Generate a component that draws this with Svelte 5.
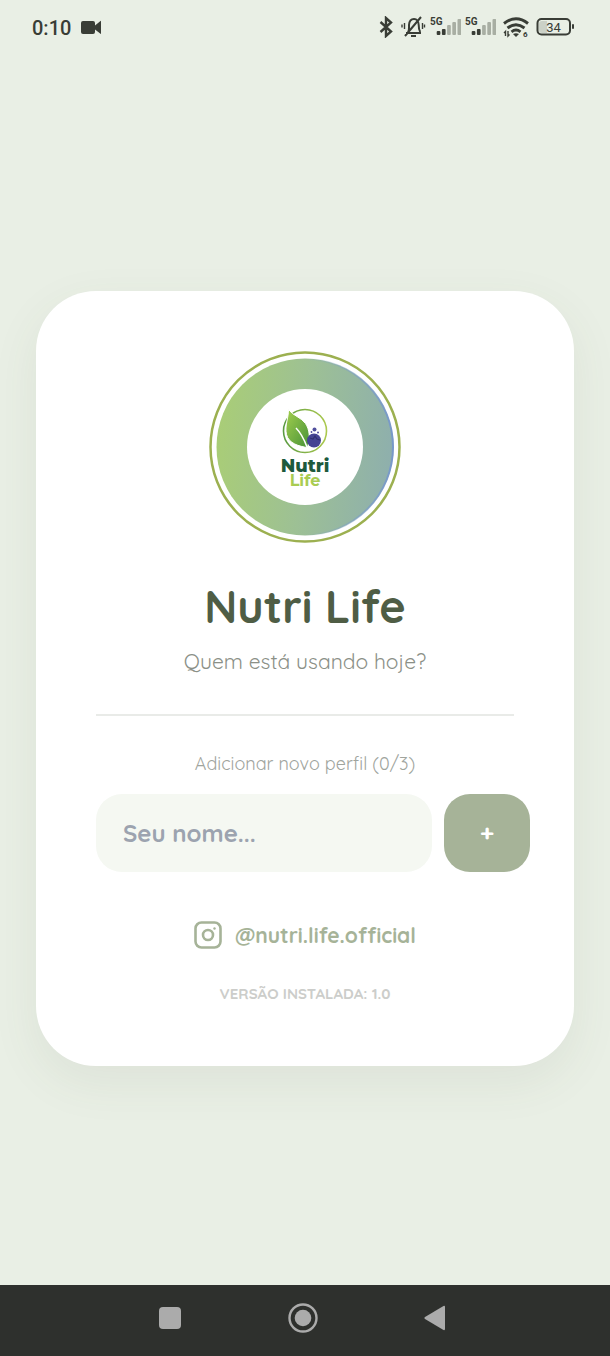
<script lang="ts">
	const maxProfiles = 3;
	const version = '1.0';

	let profiles: string[] = $state([]);
	let name = $state('');

	const bars = [4, 6, 10, 13, 16];

	function addProfile(event: SubmitEvent) {
		event.preventDefault();
		if (!name.trim() || profiles.length >= maxProfiles) return;
		profiles.push(name.trim());
		name = '';
	}
</script>

<div class="screen">
	<header class="status">
		<span class="time">0:10</span>
		<svg viewBox="0 0 22 22" width="22" height="22" aria-hidden="true">
			<path d="M2 5h10q2 0 2 2v2.500l5.500-4.500q.5-.4.5.4v12q0 .8-.5.4L14 13.500V16q0 2-2 2H2q-2 0-2-2V7q0-2 2-2z" />
		</svg>

		<div class="indicators" aria-hidden="true">
			<svg viewBox="0 0 18 22" width="18" height="22">
				<path class="line bold" d="M2.500 6l10.500 9.500-5 4.500V2l5 4.500L2.500 16" />
			</svg>

			<svg viewBox="0 0 26 22" width="26" height="22">
				<path class="line" d="M6 17h15M8 16c1.500-2 1-4 1-7 .3-4 2.500-6 5-6 3 0 4.700 3 4.700 6 0 3 .3 5 1.500 7M21 1L5 20M11 20h5" />
				<path class="line thin" d="M4.500 7v6M2 8.500v3M22.500 7v6M24.500 8.500v3" />
			</svg>

			{#each [1, 2] as sim (sim)}
				<svg viewBox="0 0 31 22" width="31" height="22">
					<text x="0" y="9" class="network">5G</text>
					{#each bars as h, i}
						<rect
							x={6.7 + i * 5.2}
							y={19 - h}
							width="3.7"
							height={h}
							rx="1"
							class:empty={i > 1}
						/>
					{/each}
				</svg>
			{/each}

			<svg viewBox="0 0 32 22" width="32" height="22">
				<path class="line wide" d="M4 7.500q12-9.500 24 0M7.500 12q8.500-6.500 17 0M11.500 15.800q4.500-3.500 9 0" />
				<path d="M13 18q3-1.500 6 0l-3 3z" />
				<path class="line thin" d="M5.500 20v-4.500l-1.500 1.500M8 15v5l1.500-1.500" />
				<text x="23" y="21" class="wifi-gen">6</text>
			</svg>

			<svg viewBox="0 0 38 22" width="38" height="22">
				<path class="charge" d="M6 5h5v12H6q-3 0-3-3V8q0-3 3-3z" />
				<rect class="line" x="1.500" y="3" width="32.500" height="15.500" rx="4" />
				<rect x="36" y="8" width="2" height="5" rx="1" />
				<text x="17.500" y="16" class="percent">34</text>
			</svg>
		</div>
	</header>

	<main>
		<section class="card">
			<svg class="logo" viewBox="0 0 192 192" role="img" aria-label="Nutri Life">
				<defs>
					<linearGradient id="ring" x1="0" y1="0.45" x2="1" y2="0.55">
						<stop offset="0" stop-color="#a9cd77" />
						<stop offset="0.5" stop-color="#9dc095" />
						<stop offset="1" stop-color="#8eafad" />
					</linearGradient>
					<linearGradient id="edge" x1="0.5" y1="0" x2="1" y2="0">
						<stop offset="0" stop-color="#83a6c5" stop-opacity="0" />
						<stop offset="1" stop-color="#7798c9" />
					</linearGradient>
					<linearGradient id="leaf" x1="0" y1="0" x2="1" y2="1">
						<stop offset="0" stop-color="#a3cf4e" />
						<stop offset="1" stop-color="#479237" />
					</linearGradient>
					<linearGradient id="stem" x1="0" y1="0" x2="1" y2="0">
						<stop offset="0" stop-color="#5b9b42" />
						<stop offset="1" stop-color="#acc94e" />
					</linearGradient>
				</defs>
				<circle cx="96" cy="96" r="94.500" fill="#fff" stroke="#9cb050" stroke-width="2.500" />
				<circle cx="96" cy="96" r="88.500" fill="url(#ring)" />
				<circle cx="96" cy="96" r="88" fill="none" stroke="url(#edge)" stroke-width="2" />
				<circle cx="96" cy="96" r="58" fill="#fff" />

				<circle cx="96" cy="80" r="21.500" fill="none" stroke="url(#stem)" stroke-width="1.600" />
				<path
					d="M79.500 58.500c4 6 13 8 17 14 4 6 5 14 2 24-8-1-19-4-21-13-2-9 2-16 2-25z"
					fill="url(#leaf)"
					stroke="#fff"
				/>
				<path d="M87 77c5 5 8 11 11 19 2 3 5 3 9 1" fill="none" stroke="#fff" stroke-width="1.500" />
				<circle cx="105" cy="89.500" r="7" fill="#454493" />
				<path d="M101 87l3 1 2-3 2 3 3 1" fill="none" stroke="#30306f" stroke-width="1.200" />
				<circle cx="105.500" cy="78.500" r="2" fill="#504f9d" />
				<circle cx="109" cy="81.500" r="1" fill="#504f9d" />
				<circle cx="102.500" cy="81" r="0.900" fill="#504f9d" />
				<text x="96" y="121" class="brand">Nutri</text>
				<text x="96" y="135" class="brand light">Life</text>
			</svg>

			<h1>Nutri Life</h1>
			<p class="question">Quem está usando hoje?</p>

			<hr />

			<form onsubmit={addProfile}>
				<label for="profile-name">Adicionar novo perfil ({profiles.length}/{maxProfiles})</label>
				<div class="row">
					<input id="profile-name" type="text" placeholder="Seu nome..." bind:value={name} />
					<button type="submit" class="add">+</button>
				</div>
			</form>

			<a class="social" href="https://instagram.com/nutri.life.official">
				<svg viewBox="0 0 28 28" width="28" height="28" aria-hidden="true">
					<rect x="1.500" y="1.500" width="25" height="25" rx="6" />
					<circle cx="14" cy="14" r="5" />
					<circle class="dot" cx="20.500" cy="7.500" r="1.200" />
				</svg>
				@nutri.life.official
			</a>

			<p class="version">VERSÃO INSTALADA: {version}</p>
		</section>
	</main>

	<nav>
		<button type="button" aria-label="Recentes">
			<svg viewBox="0 0 32 32" width="32" height="32">
				<rect x="5" y="5" width="22" height="22" rx="4" />
			</svg>
		</button>
		<button type="button" aria-label="Início">
			<svg viewBox="0 0 32 32" width="32" height="32">
				<circle cx="16" cy="16" r="13.500" class="outline" />
				<circle cx="16" cy="16" r="8.300" />
			</svg>
		</button>
		<button type="button" aria-label="Voltar">
			<svg viewBox="0 0 32 32" width="32" height="32">
				<path d="M5 15L23.500 4q1.500-.6 1.500 1v22q0 1.600-1.500 1L5 17q-1.500-1 0-2z" />
			</svg>
		</button>
	</nav>
</div>

<style>
	:global(body) {
		margin: 0;
		background: #e9efe5;
	}

	.screen {
		display: flex;
		flex-direction: column;
		min-height: 100vh;
		font-family: Quicksand, Lato, sans-serif;
	}

	.status {
		box-sizing: border-box;
		display: flex;
		align-items: flex-start;
		gap: 10px;
		height: 72px;
		padding: 16px 36px 0 32px;
		color: #393d36;
		fill: #393d36;
		font-family: Roboto, sans-serif;
	}

	.time {
		font-size: 20px;
		font-weight: 500;
		line-height: 24px;
	}

	.indicators {
		display: flex;
		gap: 4px;
		margin-left: auto;
	}

	.line {
		fill: none;
		stroke: #393d36;
		stroke-width: 2;
	}

	.bold {
		stroke-width: 2.4;
	}

	.thin {
		stroke-width: 1.4;
	}

	.wide {
		stroke-width: 2.9;
	}

	.empty {
		fill: #a8aea3;
	}

	.charge {
		fill: #cbd1c7;
	}

	.network {
		font-size: 10px;
		font-weight: 700;
	}

	.wifi-gen {
		font-size: 8px;
		font-weight: 700;
	}

	.percent {
		font-size: 13px;
		text-anchor: middle;
	}

	main {
		flex: 1;
		display: flex;
		align-items: center;
		padding: 0 36px;
	}

	.card {
		box-sizing: border-box;
		display: flex;
		flex-direction: column;
		align-items: center;
		width: 100%;
		padding: 60px;
		border-radius: 60px;
		background: #fff;
		box-shadow: 0 16px 48px rgba(74, 93, 69, 0.08);
	}

	.logo {
		width: 192px;
		height: 192px;
	}

	.brand {
		font-family: Montserrat, Inter, sans-serif;
		font-size: 18px;
		font-weight: 800;
		text-anchor: middle;
		fill: #1d5a3c;
	}

	.brand.light {
		font-size: 16px;
		font-weight: 700;
		fill: #a9cc52;
	}

	h1 {
		margin: 35px 0 13px;
		color: #4f5d45;
		font-size: 45px;
		font-weight: 700;
		line-height: 56px;
	}

	p {
		margin: 0;
	}

	.question {
		color: #8b9087;
		font-size: 21px;
		font-weight: 400;
		line-height: 28px;
	}

	hr {
		width: 100%;
		height: 2px;
		margin: 39px 0 36px;
		border: 0;
		background: #e9ebe8;
	}

	form {
		width: 100%;
	}

	label {
		display: block;
		margin-bottom: 18px;
		color: #a0a49d;
		font-size: 18px;
		font-weight: 400;
		line-height: 24px;
		text-align: center;
	}

	/* the row runs slightly wider than the rest of the card */
	.row {
		display: flex;
		gap: 12px;
		margin-right: -16px;
	}

	input {
		box-sizing: border-box;
		flex: 1;
		min-width: 0;
		height: 78px;
		padding: 0 27px;
		border: 0;
		border-radius: 26px;
		background: #f5f8f2;
		color: #4f5d45;
		font-family: inherit;
		font-size: 24px;
		font-weight: 700;
	}

	input::placeholder {
		color: #9ca3af;
		opacity: 1;
	}

	.add {
		width: 86px;
		height: 78px;
		padding: 0;
		border: 0;
		border-radius: 26px;
		background: #a6b398;
		color: #fff;
		font-family: inherit;
		font-size: 24px;
		font-weight: 700;
	}

	.social {
		display: flex;
		align-items: center;
		gap: 13px;
		margin: 49px 0 35px;
		color: #a6b398;
		font-size: 21px;
		font-weight: 700;
		line-height: 28px;
		text-decoration: none;
	}

	.social svg {
		fill: none;
		stroke: #a6b398;
		stroke-width: 2.6;
	}

	.social .dot {
		fill: #a6b398;
		stroke: none;
	}

	.version {
		margin-bottom: 2px;
		color: #cccdca;
		font-size: 15px;
		font-weight: 700;
		line-height: 20px;
	}

	nav {
		box-sizing: border-box;
		display: flex;
		align-items: center;
		justify-content: center;
		gap: 101px;
		height: 71px;
		padding: 0 4px 5px 0;
		background: #2e302d;
	}

	nav button {
		display: flex;
		padding: 0;
		border: 0;
		background: none;
		fill: #ababab;
	}

	.outline {
		fill: none;
		stroke: #ababab;
		stroke-width: 2.4;
	}
</style>
